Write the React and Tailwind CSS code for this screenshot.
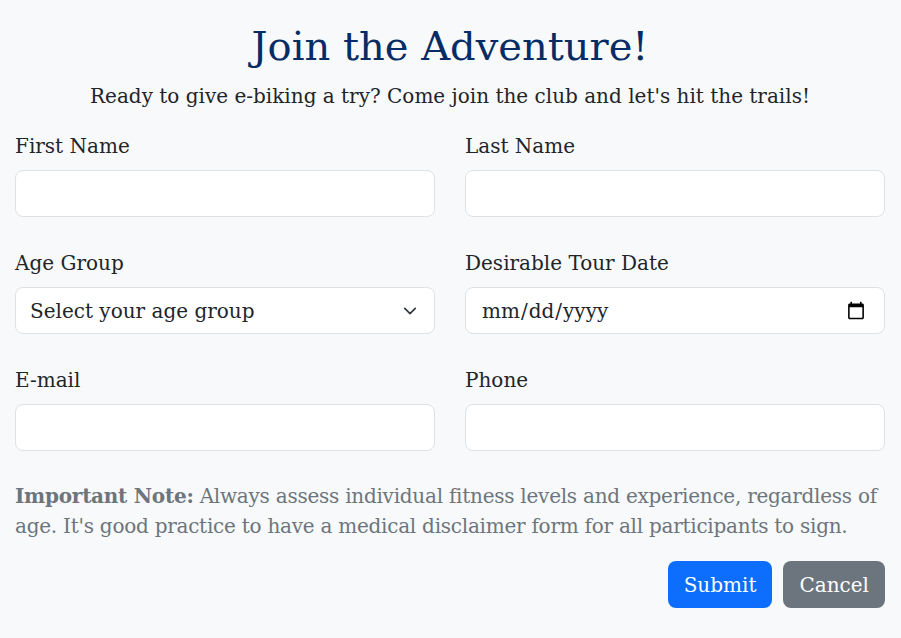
import { useState } from "react";

const font = "font-['DejaVu_Serif','Liberation_Serif',serif]";

const Field = ({ label, children }) => (
  <div className="flex flex-col">
    <label className="mb-2 text-[20px] leading-[30px] text-[#212529]">{label}</label>
    {children}
  </div>
);

const inputCls =
  "h-[47px] w-full rounded-lg border border-[#dee2e6] bg-white px-4 text-[20px] text-[#212529] outline-none";

export default function App() {
  const [age, setAge] = useState("");

  return (
    <div className={`min-h-[638px] bg-[#f8f9fa] pl-[15px] pr-4 pt-[22px] ${font}`}>
      <h1 className="text-center text-[40px] leading-[48px] text-[#052c65]">Join the Adventure!</h1>
      <p className="mt-[11px] text-center text-[20px] leading-[30px] text-[#212529]">
        Ready to give e-biking a try? Come join the club and let's hit the trails!
      </p>

      <form className="mt-[20px]">
        <div className="grid grid-cols-2 gap-x-[30px] gap-y-[31px]">
          <Field label="First Name">
            <input type="text" className={`${inputCls} mt-px`} />
          </Field>
          <Field label="Last Name">
            <input type="text" className={`${inputCls} mt-px`} />
          </Field>
          <Field label="Age Group">
            <div className="relative mt-px">
              <select
                value={age}
                onChange={(e) => setAge(e.target.value)}
                className={`${inputCls} appearance-none pl-[14px] pr-12`}
              >
                <option value="">Select your age group</option>
                <option value="18-25">18-25</option>
                <option value="26-40">26-40</option>
                <option value="41-60">41-60</option>
                <option value="60+">60+</option>
              </select>
              <svg
                className="pointer-events-none absolute right-[17px] top-[17px]"
                width="16"
                height="14"
                viewBox="0 0 16 16"
                fill="none"
                stroke="#343a40"
                strokeWidth="2"
                strokeLinecap="round"
                strokeLinejoin="round"
              >
                <path d="m2 5 6 6 6-6" />
              </svg>
            </div>
          </Field>
          <Field label="Desirable Tour Date">
            <input type="date" className={`${inputCls} mt-px pl-[15px]`} />
          </Field>
          <Field label="E-mail">
            <input type="email" className={`${inputCls} mt-px`} />
          </Field>
          <Field label="Phone">
            <input type="tel" className={`${inputCls} mt-px`} />
          </Field>
        </div>

        <p className="mt-[30px] text-[20px] leading-[30px] tracking-[-0.25px] text-[#6c757d]">
          <strong className="font-bold">Important Note:</strong> Always assess individual fitness levels and
          experience, regardless of age. It's good practice to have a medical disclaimer form for all
          participants to sign.
        </p>

        <div className="mt-[20px] flex justify-end gap-[11px]">
          <button type="submit" className="h-[47px] rounded-lg bg-[#0d6efd] px-4 text-[20px] text-white">
            Submit
          </button>
          <button type="button" className="h-[47px] rounded-lg bg-[#6c757d] px-4 text-[20px] text-white">
            Cancel
          </button>
        </div>
      </form>
    </div>
  );
}
